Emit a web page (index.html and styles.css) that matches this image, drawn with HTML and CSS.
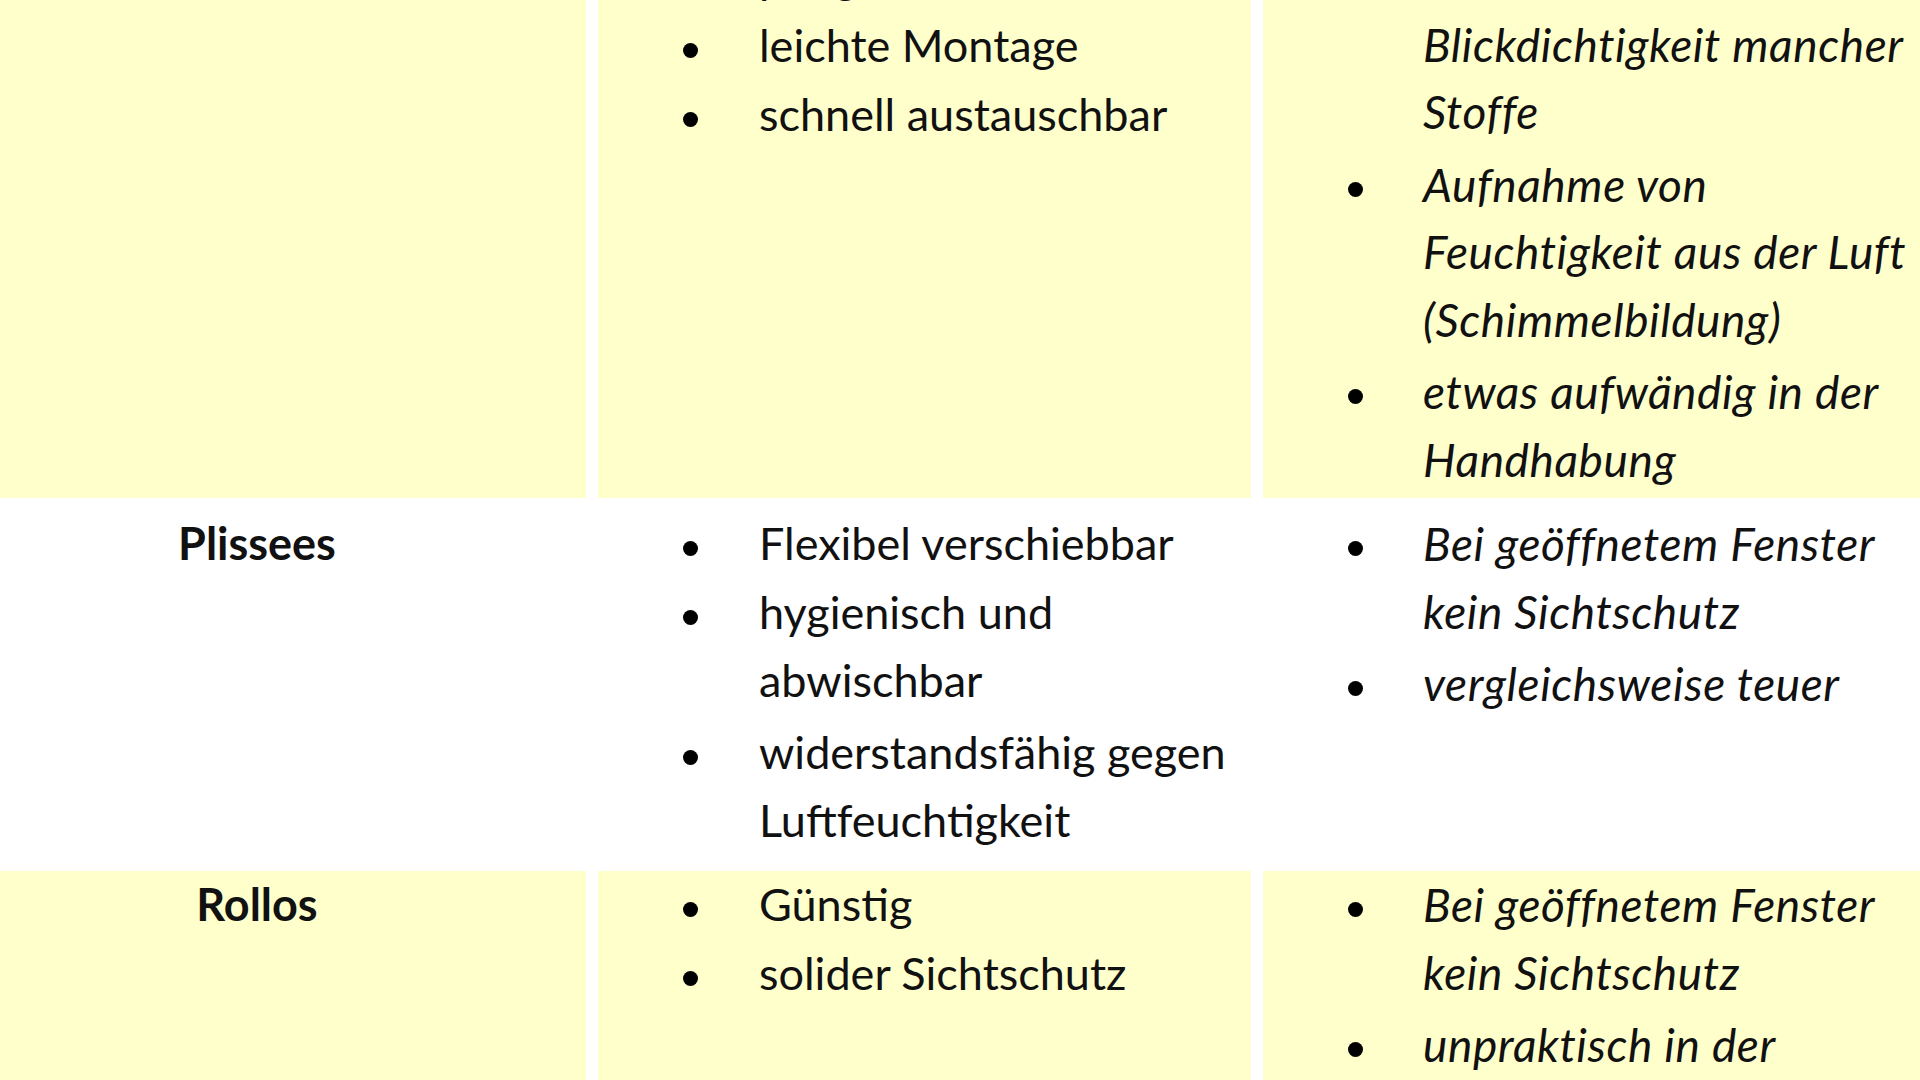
FILE: index.html
```html
<!DOCTYPE html>
<html lang="de">
<head>
<meta charset="utf-8">
<title>Sichtschutz im Vergleich</title>
<link rel="stylesheet" href="styles.css">
</head>
<body>
<table class="compare">
  <colgroup>
    <col class="col-type">
    <col class="col-pros">
    <col class="col-cons">
  </colgroup>
  <tr class="row row-yellow">
    <th class="type">Gardinen</th>
    <td class="pros">
      <ul class="list">
        <li>pflegeleicht</li>
        <li>leichte Montage</li>
        <li>schnell austauschbar</li>
      </ul>
    </td>
    <td class="cons">
      <ul class="list">
        <li class="multi">unzureichende Blickdichtigkeit mancher Stoffe</li>
        <li class="multi">Aufnahme von Feuchtigkeit aus der Luft (Schimmelbildung)</li>
        <li class="multi">etwas aufwändig in der Handhabung</li>
      </ul>
    </td>
  </tr>
  <tr class="row row-white">
    <th class="type">Plissees</th>
    <td class="pros">
      <ul class="list">
        <li>Flexibel verschiebbar</li>
        <li class="multi">hygienisch und abwischbar</li>
        <li class="multi">widerstandsfähig gegen Luftfeuchtigkeit</li>
      </ul>
    </td>
    <td class="cons">
      <ul class="list">
        <li class="multi">Bei geöffnetem Fenster kein Sichtschutz</li>
        <li>vergleichsweise teuer</li>
      </ul>
    </td>
  </tr>
  <tr class="row row-yellow">
    <th class="type">Rollos</th>
    <td class="pros">
      <ul class="list">
        <li>Günstig</li>
        <li>solider Sichtschutz</li>
      </ul>
    </td>
    <td class="cons">
      <ul class="list">
        <li class="multi">Bei geöffnetem Fenster kein Sichtschutz</li>
        <li class="multi">unpraktisch in der Handhabung</li>
      </ul>
    </td>
  </tr>
</table>
</body>
</html>
```
FILE: styles.css
```css
html, body {
  margin: 0;
  padding: 0;
  background: #ffffff;
  overflow: hidden;
  height: 100%;
}

body {
  font-family: "Lato", "Liberation Sans", sans-serif;
  font-size: 45px;
  color: #111111;
}

.compare {
  border-collapse: separate;
  border-spacing: 12px;
  table-layout: fixed;
  width: 2059px;
  margin: -69px 0 0 -84px;
}

.col-type { width: 658px; }
.col-pros { width: 653px; }
.col-cons { width: 700px; }

.compare th,
.compare td {
  padding: 0;
  vertical-align: top;
  text-align: left;
}

.row-yellow > th,
.row-yellow > td {
  background: #ffffcc;
}

.row-white > th,
.row-white > td {
  background: #ffffff;
}

.compare th.type {
  font-weight: 700;
  text-align: center;
  line-height: 67.5px;
}

.compare td.pros { padding-right: 6px; }
.compare td.cons { padding-right: 35px; }

.list {
  list-style: none;
  margin: 0;
  padding: 0;
}

.list li {
  display: flex;
  line-height: 67.5px;
  margin-bottom: 1.5px;
}

.list li.multi {
  margin-bottom: 5px;
}

.list li::before {
  content: "";
  flex: none;
  width: 15px;
  height: 15px;
  border-radius: 50%;
  background: #000000;
  margin: 31px 61px 0 85px;
}

.cons .list li {
  font-style: italic;
  font-size: 46px;
  letter-spacing: 0.6px;
}

.cons .list li::before {
  margin-right: 60px;
}
```
